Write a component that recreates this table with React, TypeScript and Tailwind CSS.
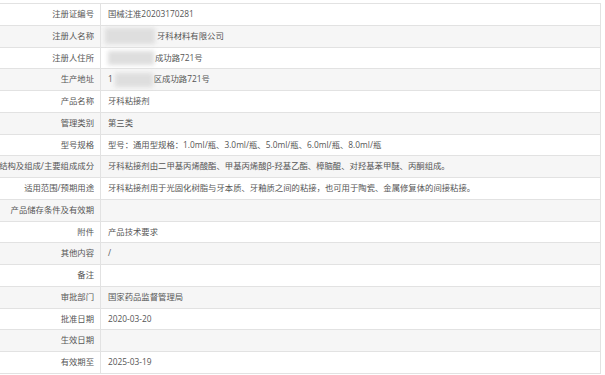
import React from "react";

type Row = { label: string; value: React.ReactNode };

const Blur = ({ w, className = "" }: { w: number; className?: string }) => (
  <span
    className={`inline-block h-[14px] align-middle bg-[#dedede] blur-[2px] ${className}`}
    style={{ width: w }}
  />
);

const rows: Row[] = [
  { label: "注册证编号", value: "国械注准20203170281" },
  {
    label: "注册人名称",
    value: (
      <>
        <Blur w={50} className="-ml-[3px] mr-[2px] h-[16px]" />
        牙科材料有限公司
      </>
    ),
  },
  {
    label: "注册人住所",
    value: (
      <>
        <Blur w={46} className="mr-[1px]" />
        成功路721号
      </>
    ),
  },
  {
    label: "生产地址",
    value: (
      <>
        1<Blur w={38} className="ml-[2px] mr-[1px]" />
        区成功路721号
      </>
    ),
  },
  { label: "产品名称", value: "牙科粘接剂" },
  { label: "管理类别", value: "第三类" },
  {
    label: "型号规格",
    value: "型号：通用型规格：1.0ml/瓶、3.0ml/瓶、5.0ml/瓶、6.0ml/瓶、8.0ml/瓶",
  },
  {
    label: "结构及组成/主要组成成分",
    value: "牙科粘接剂由二甲基丙烯酸酯、甲基丙烯酸β-羟基乙酯、樟脑醌、对羟基苯甲醚、丙酮组成。",
  },
  {
    label: "适用范围/预期用途",
    value: "牙科粘接剂用于光固化树脂与牙本质、牙釉质之间的粘接，也可用于陶瓷、金属修复体的间接粘接。",
  },
  { label: "产品储存条件及有效期", value: "" },
  { label: "附件", value: "产品技术要求" },
  { label: "其他内容", value: "/" },
  { label: "备注", value: "" },
  { label: "审批部门", value: "国家药品监督管理局" },
  { label: "批准日期", value: "2020-03-20" },
  { label: "生效日期", value: "" },
  { label: "有效期至", value: "2025-03-19" },
];

export default function App() {
  return (
    <div
      className="w-[605px] h-[375px] overflow-hidden bg-white pt-[3px]"
      style={{ fontFamily: '"Open Sans", "Noto Sans CJK SC", sans-serif' }}
    >
      <div className="w-[601px] border-t border-r border-[#e2e2e2]">
        {rows.map((row, i) => (
          <div
            key={row.label}
            className={`flex h-[21.75px] border-b border-[#e2e2e2] text-[8.35px] leading-none ${
              i % 2 === 1 ? "bg-[#f6f6f6]" : "bg-white"
            }`}
          >
            <div className="w-[101px] shrink-0 flex items-center justify-end pr-[6px] border-r border-[#e2e2e2] text-[#555] whitespace-nowrap">
              {row.label}
            </div>
            <div className="flex-1 flex items-center pl-[7px] text-[#555] whitespace-nowrap">
              {row.value}
            </div>
          </div>
        ))}
      </div>
    </div>
  );
}
